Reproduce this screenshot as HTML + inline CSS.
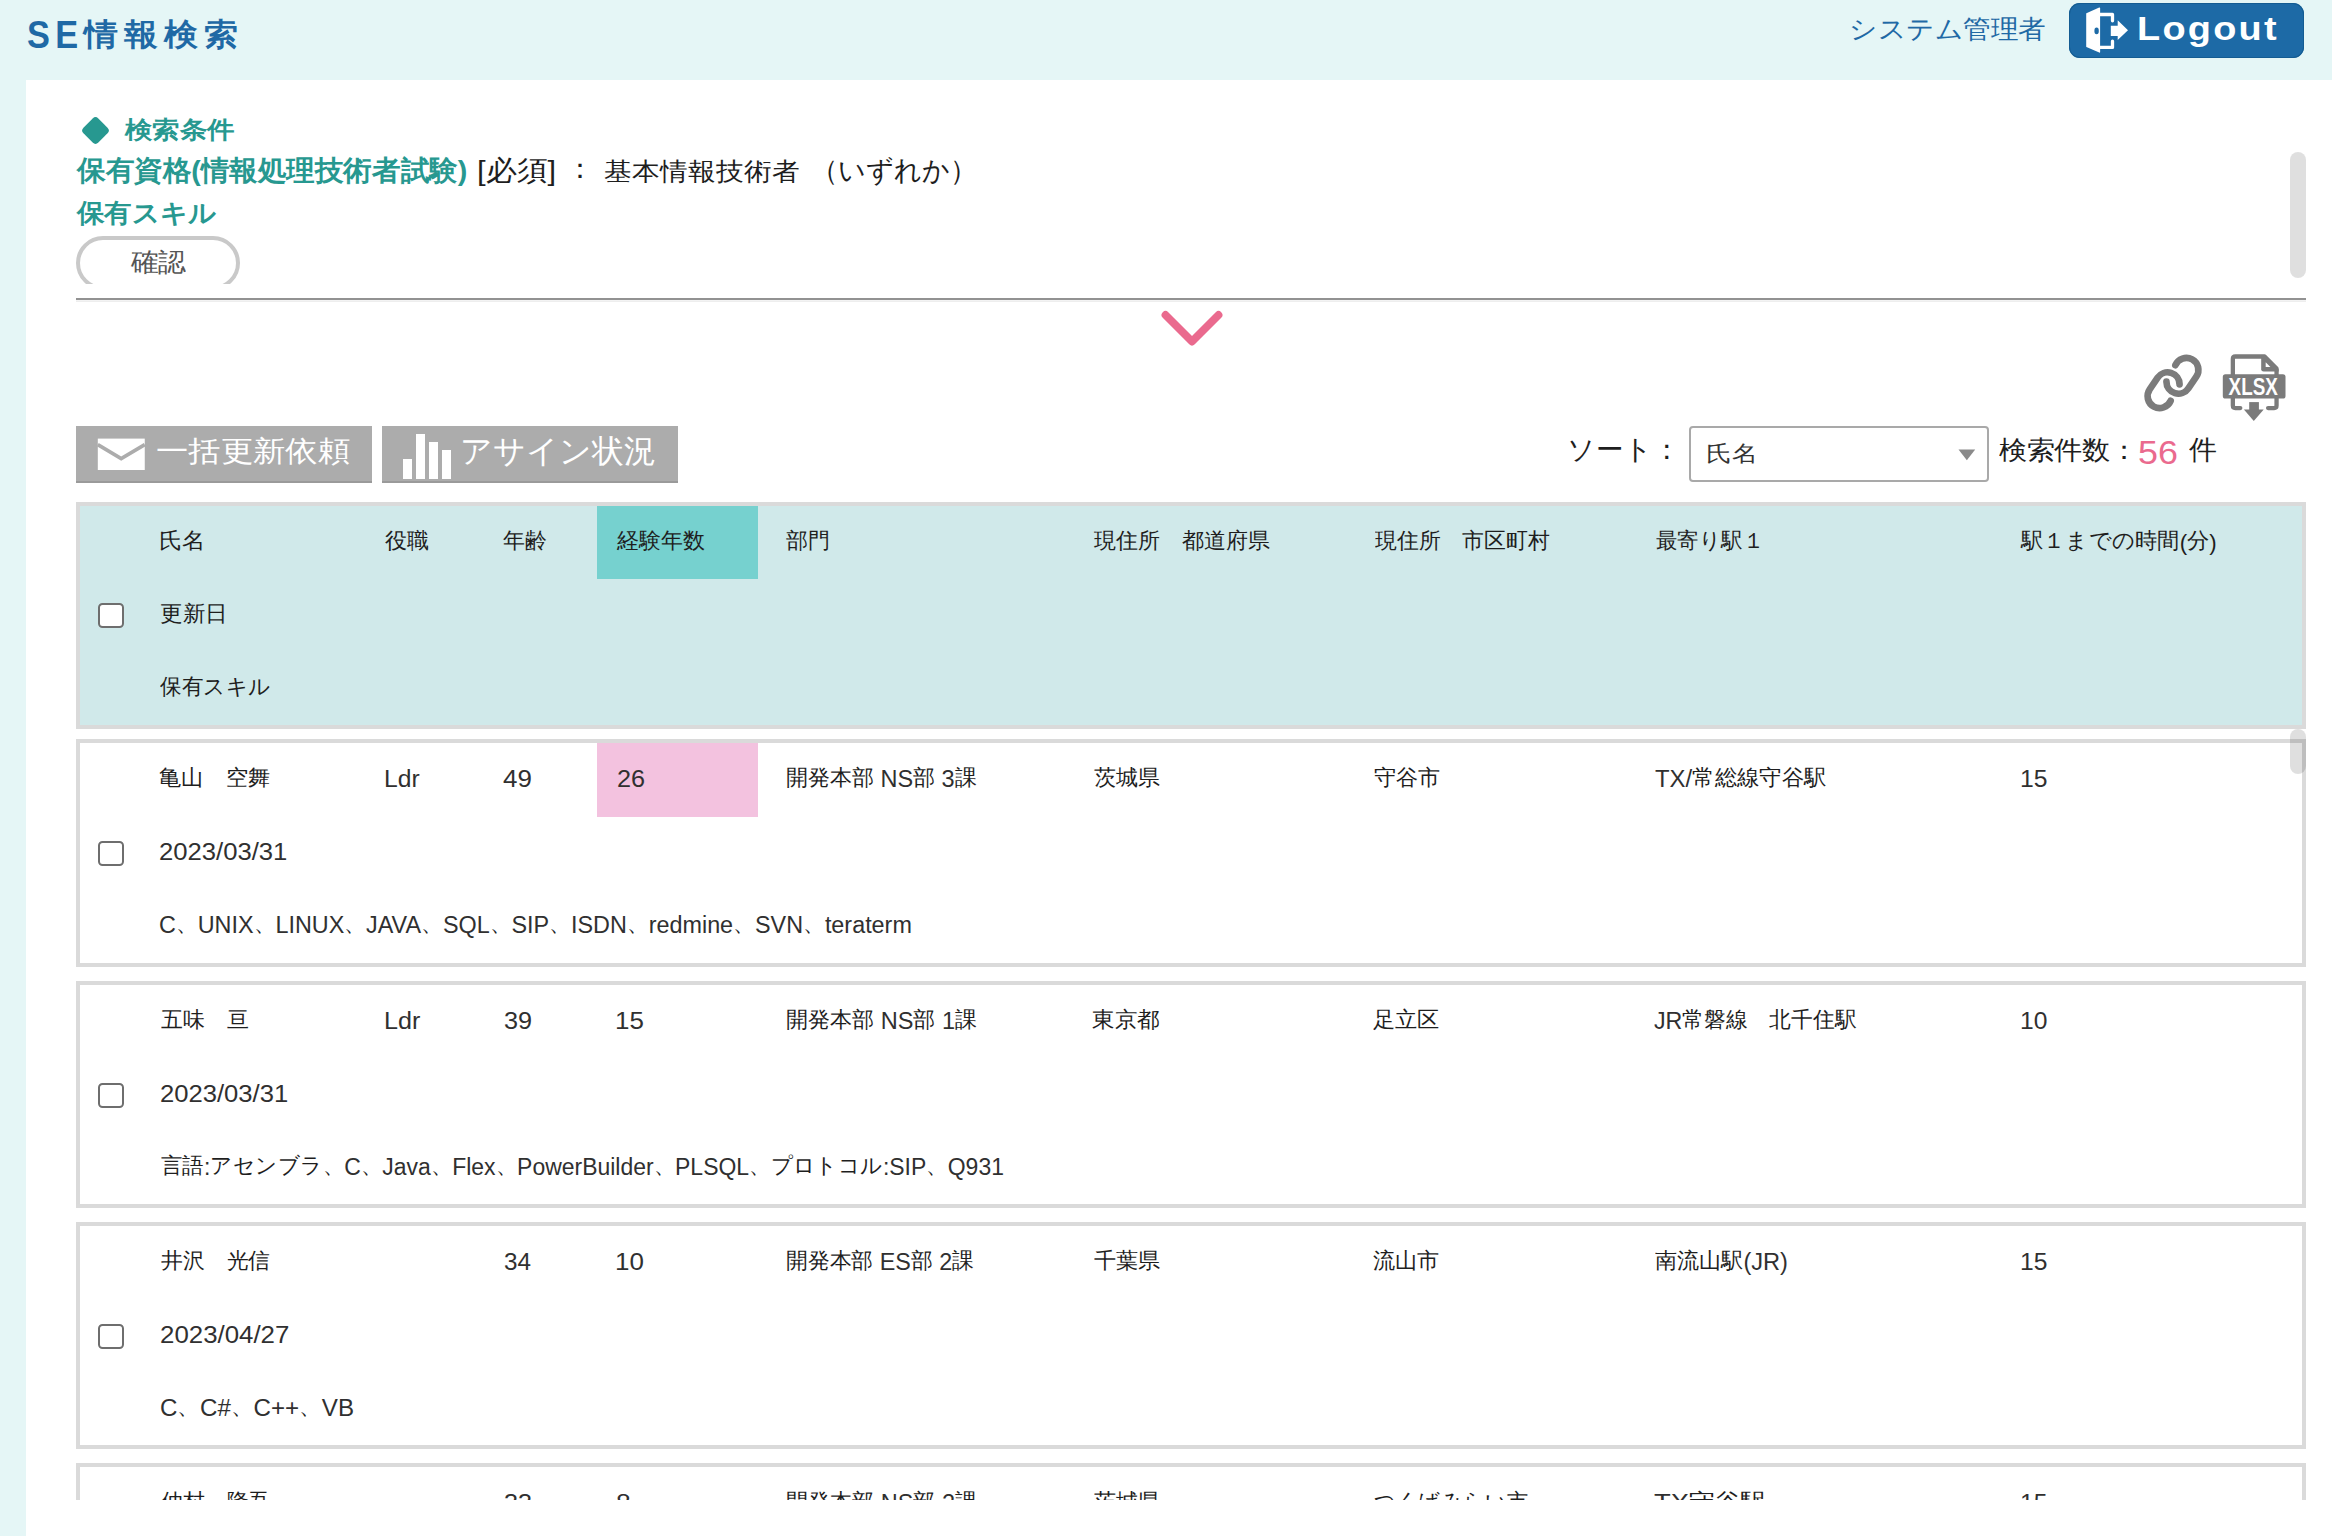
<!DOCTYPE html>
<html><head><meta charset="utf-8"><style>
html,body{margin:0;padding:0}
body{width:2332px;height:1536px;overflow:hidden;position:relative;background:#e5f6f6;font-family:"Liberation Sans", sans-serif}
</style></head><body>
<div style="position:absolute;left:26px;top:80px;width:2306px;height:1456px;background:#fff"></div><div style="position:absolute;left:2069px;top:3px;width:235px;height:55px;background:#1d6aa6;border-radius:11px;box-shadow:inset 0 0 0 1px #145c92"></div><svg style="position:absolute;left:2066px;top:0px" width="74" height="62" viewBox="0 0 74 62">
<path d="M20.4 13.2 L33.2 7.5 Q34.1 7.2 34.1 8.2 L34.1 52.0 Q34.1 53 33.2 52.6 L20.4 46.9 Q20.2 46.8 20.2 46.4 L20.2 13.6 Q20.2 13.3 20.4 13.2 Z" fill="#fff"/>
<ellipse cx="30.6" cy="30.9" rx="2.2" ry="3.3" fill="#1d6aa6"/>
<path d="M34 14.5 H46.5 V20.8" fill="none" stroke="#fff" stroke-width="3.3" stroke-linecap="round" stroke-linejoin="round"/>
<path d="M34 47.4 H46.5 V41.2" fill="none" stroke="#fff" stroke-width="3.3" stroke-linecap="round" stroke-linejoin="round"/>
<path d="M44.8 25.8 H51.7 V20.2 L62 30.2 L51.7 40 V35.9 H44.8 Z" fill="#fff"/>
</svg><div style="position:absolute;left:84.5px;top:119.5px;width:21px;height:21px;background:#279890;transform:rotate(45deg);border-radius:4px"></div><div style="position:absolute;left:76px;top:80px;width:2200px;height:204px;overflow:hidden"><div style="position:absolute;left:0px;top:156px;width:164px;height:54px;border:4px solid #c9c9c9;border-radius:27px;background:#fff;box-sizing:border-box"></div></div><div style="position:absolute;left:2290px;top:152px;width:16px;height:126px;background:rgba(0,0,0,0.125);border-radius:8px"></div><div style="position:absolute;left:76px;top:298px;width:2230px;height:2px;background:#929292"></div><div style="position:absolute;left:76px;top:300px;width:2230px;height:1px;background:#f3f3f3"></div><div style="position:absolute;left:76px;top:301px;width:2230px;height:1px;background:#eeeeee"></div><svg style="position:absolute;left:1150px;top:300px" width="90" height="60" viewBox="1150 300 90 60"><polyline points="1165.5,315 1192,341.5 1218.5,315" fill="none" stroke="#ea6a8e" stroke-width="7.8" stroke-linecap="round" stroke-linejoin="round"/></svg><svg style="position:absolute;left:2143.4px;top:353.3px" width="60" height="60" viewBox="-30 -30 60 60">
<g fill="none" stroke="#7b7b7b" stroke-width="6.7" stroke-linecap="round">
<path d="M 2.37 -17.81 A 12 12 0 1 1 23.31 -6.32 L 15.36 5.37 A 12 12 0 0 1 -6.56 -1.37"/>
<path d="M -2.37 17.81 A 12 12 0 1 1 -23.31 6.32 L -15.36 -5.37 A 12 12 0 0 1 6.56 1.37"/>
</g></svg><svg style="position:absolute;left:2218px;top:348px" width="74" height="78" viewBox="0 0 74 78">
<g fill="none" stroke="#7b7b7b" stroke-width="4.3" stroke-linejoin="round">
<path d="M 14.85 27 V 11 Q 14.85 8.5 17.3 8.5 H 46.6 L 58.55 20.6 V 27"/>
<path d="M 14.85 50 V 57.6 Q 14.85 60.05 17.3 60.05 H 22.3" stroke-linecap="round"/>
<path d="M 50.1 60.05 H 56.1 Q 58.55 60.05 58.55 57.6 V 50" stroke-linecap="round"/>
</g>
<path d="M 43.2 8 H 47.2 L 60.7 21.6 V 23.6 H 45.6 Q 43.2 23.6 43.2 21.2 Z" fill="#7b7b7b"/>
<path d="M 47.7 14.2 L 52.4 19 H 47.7 Z" fill="#fff"/>
<rect x="4.8" y="26.2" width="62.7" height="24.3" rx="2.6" fill="#7b7b7b"/>
<text x="10.6" y="47.2" font-family="Liberation Sans" font-weight="bold" font-size="23.5" fill="#fff" textLength="49.2" lengthAdjust="spacingAndGlyphs">XLSX</text>
<rect x="31.2" y="54.1" width="9.7" height="8" fill="#7b7b7b"/>
<path d="M 25.9 61.5 H 45.7 L 35.8 72.9 Z" fill="#7b7b7b" stroke="#fff" stroke-width="0"/>
</svg><div style="position:absolute;left:76px;top:426px;width:296px;height:57px;background:#acacac;box-shadow:inset 0 -2px 0 #9a9a9a"></div><div style="position:absolute;left:382px;top:426px;width:296px;height:57px;background:#acacac;box-shadow:inset 0 -2px 0 #9a9a9a"></div><svg style="position:absolute;left:90px;top:426px" width="70" height="57" viewBox="0 0 70 57">
<rect x="7.8" y="12.6" width="46.95" height="31.4" fill="#fff"/>
<polyline points="7.8,18.6 31.2,32.6 54.75,18.6" fill="none" stroke="#acacac" stroke-width="3.6"/>
</svg><div style="position:absolute;left:403.2px;top:458.9px;width:9.100000000000023px;height:20.0px;background:#fff"></div><div style="position:absolute;left:416px;top:434.2px;width:9.100000000000023px;height:44.69999999999999px;background:#fff"></div><div style="position:absolute;left:429px;top:442.3px;width:9.100000000000023px;height:36.599999999999966px;background:#fff"></div><div style="position:absolute;left:441.6px;top:449.9px;width:9.099999999999966px;height:29.0px;background:#fff"></div><div style="position:absolute;left:1689px;top:426px;width:300px;height:55.5px;border:2.5px solid #a9a9a9;border-radius:4px;box-sizing:border-box;background:#fff"></div><svg style="position:absolute;left:1950px;top:440px" width="30" height="30" viewBox="1950 440 30 30"><path d="M1958.5 449.6 H1975.2 L1966.85 460.3 Z" fill="#8a8a8a"/></svg><div style="position:absolute;left:76px;top:502px;width:2230px;height:227px;background:#d0e9ea;border:4px solid #dadada;box-sizing:border-box"></div><div style="position:absolute;left:597px;top:506px;width:161px;height:73px;background:#76d1cf"></div><div style="position:absolute;left:98.3px;top:603.2px;width:25.5px;height:25.299999999999955px;border:2px solid #6e6e6e;border-radius:4.5px;background:#fff;box-sizing:border-box"></div><div style="position:absolute;left:76px;top:729px;width:2230px;height:771px;overflow:hidden"><div style="position:absolute;left:0px;top:10px;width:2230px;height:228px;border:4px solid #dadada;box-sizing:border-box;background:#fff"></div><div style="position:absolute;left:0px;top:252px;width:2230px;height:227px;border:4px solid #dadada;box-sizing:border-box;background:#fff"></div><div style="position:absolute;left:0px;top:493px;width:2230px;height:227px;border:4px solid #dadada;box-sizing:border-box;background:#fff"></div><div style="position:absolute;left:0px;top:734px;width:2230px;height:227px;border:4px solid #dadada;box-sizing:border-box;background:#fff"></div><div style="position:absolute;left:521px;top:14px;width:161px;height:74px;background:#f3c2df"></div><div style="position:absolute;left:22.299999999999997px;top:112.20000000000005px;width:25.5px;height:25.3px;border:2px solid #6e6e6e;border-radius:4.5px;background:#fff;box-sizing:border-box"></div><div style="position:absolute;left:22.299999999999997px;top:354.20000000000005px;width:25.5px;height:25.3px;border:2px solid #6e6e6e;border-radius:4.5px;background:#fff;box-sizing:border-box"></div><div style="position:absolute;left:22.299999999999997px;top:595.2px;width:25.5px;height:25.3px;border:2px solid #6e6e6e;border-radius:4.5px;background:#fff;box-sizing:border-box"></div><div style="position:absolute;left:22.299999999999997px;top:836.2px;width:25.5px;height:25.3px;border:2px solid #6e6e6e;border-radius:4.5px;background:#fff;box-sizing:border-box"></div><div style="position:absolute;left:83.39px;top:39.50px;font-size:22px;font-weight:normal;letter-spacing:0px;line-height:22px;white-space:nowrap;color:#1e1e1e;transform-origin:0 0;transform:scale(1.0120,1.0000);"><span style="position:relative;top:-2px;font-size:22px">亀山　空舞</span></div><div style="position:absolute;left:308.10px;top:38.50px;font-size:22px;font-weight:normal;letter-spacing:0px;line-height:22px;white-space:nowrap;color:#1e1e1e;transform-origin:0 0;transform:scale(1.0500,1.0000);"><span style="font-size:23.5px;color:#303030">Ldr</span></div><div style="position:absolute;left:427.40px;top:38.50px;font-size:22px;font-weight:normal;letter-spacing:0px;line-height:22px;white-space:nowrap;color:#1e1e1e;transform-origin:0 0;transform:scale(1.1042,1.0000);"><span style="font-size:23.5px;color:#303030">49</span></div><div style="position:absolute;left:540.92px;top:38.50px;font-size:22px;font-weight:normal;letter-spacing:0px;line-height:22px;white-space:nowrap;color:#1e1e1e;transform-origin:0 0;transform:scale(1.0750,1.0000);"><span style="font-size:23.5px;color:#303030">26</span></div><div style="position:absolute;left:709.90px;top:38.50px;font-size:22px;font-weight:normal;letter-spacing:0px;line-height:22px;white-space:nowrap;color:#1e1e1e;transform-origin:0 0;"><span style="position:relative;top:-2px;font-size:22px">開発本部</span><span style="font-size:23.5px;color:#303030"> NS</span><span style="position:relative;top:-2px;font-size:22px">部</span><span style="font-size:23.5px;color:#303030"> 3</span><span style="position:relative;top:-2px;font-size:22px">課</span></div><div style="position:absolute;left:1017.80px;top:39.50px;font-size:22px;font-weight:normal;letter-spacing:0px;line-height:22px;white-space:nowrap;color:#1e1e1e;transform-origin:0 0;"><span style="position:relative;top:-2px;font-size:22px">茨城県</span></div><div style="position:absolute;left:1297.99px;top:39.50px;font-size:22px;font-weight:normal;letter-spacing:0px;line-height:22px;white-space:nowrap;color:#1e1e1e;transform-origin:0 0;transform:scale(1.0063,1.0000);"><span style="position:relative;top:-2px;font-size:22px">守谷市</span></div><div style="position:absolute;left:1578.58px;top:38.50px;font-size:22px;font-weight:normal;letter-spacing:0px;line-height:22px;white-space:nowrap;color:#1e1e1e;transform-origin:0 0;transform:scale(1.0168,1.0000);"><span style="font-size:23.5px;color:#303030">TX/</span><span style="position:relative;top:-2px;font-size:22px">常総線守谷駅</span></div><div style="position:absolute;left:1944.10px;top:38.50px;font-size:22px;font-weight:normal;letter-spacing:0px;line-height:22px;white-space:nowrap;color:#1e1e1e;transform-origin:0 0;transform:scale(1.0522,1.0000);"><span style="font-size:23.5px;color:#303030">15</span></div><div style="position:absolute;left:83.31px;top:111.50px;font-size:22px;font-weight:normal;letter-spacing:0px;line-height:22px;white-space:nowrap;color:#1e1e1e;transform-origin:0 0;transform:scale(1.0914,1.0000);"><span style="font-size:23.5px;color:#303030">2023/03/31</span></div><div style="position:absolute;left:83.41px;top:184.50px;font-size:22px;font-weight:normal;letter-spacing:0px;line-height:22px;white-space:nowrap;color:#1e1e1e;transform-origin:0 0;transform:scale(0.9939,1.0000);"><span style="font-size:23.5px;color:#303030">C</span><span style="position:relative;top:-2px;font-size:22px">、</span><span style="font-size:23.5px;color:#303030">UNIX</span><span style="position:relative;top:-2px;font-size:22px">、</span><span style="font-size:23.5px;color:#303030">LINUX</span><span style="position:relative;top:-2px;font-size:22px">、</span><span style="font-size:23.5px;color:#303030">JAVA</span><span style="position:relative;top:-2px;font-size:22px">、</span><span style="font-size:23.5px;color:#303030">SQL</span><span style="position:relative;top:-2px;font-size:22px">、</span><span style="font-size:23.5px;color:#303030">SIP</span><span style="position:relative;top:-2px;font-size:22px">、</span><span style="font-size:23.5px;color:#303030">ISDN</span><span style="position:relative;top:-2px;font-size:22px">、</span><span style="font-size:23.5px;color:#303030">redmine</span><span style="position:relative;top:-2px;font-size:22px">、</span><span style="font-size:23.5px;color:#303030">SVN</span><span style="position:relative;top:-2px;font-size:22px">、</span><span style="font-size:23.5px;color:#303030">teraterm</span></div><div style="position:absolute;left:84.60px;top:281.50px;font-size:22px;font-weight:normal;letter-spacing:0px;line-height:22px;white-space:nowrap;color:#1e1e1e;transform-origin:0 0;transform:scale(0.9931,1.0000);"><span style="position:relative;top:-2px;font-size:22px">五味　亘</span></div><div style="position:absolute;left:307.66px;top:280.50px;font-size:22px;font-weight:normal;letter-spacing:0px;line-height:22px;white-space:nowrap;color:#1e1e1e;transform-origin:0 0;transform:scale(1.0687,1.0000);"><span style="font-size:23.5px;color:#303030">Ldr</span></div><div style="position:absolute;left:428.12px;top:280.50px;font-size:22px;font-weight:normal;letter-spacing:0px;line-height:22px;white-space:nowrap;color:#1e1e1e;transform-origin:0 0;transform:scale(1.0750,1.0000);"><span style="font-size:23.5px;color:#303030">39</span></div><div style="position:absolute;left:539.39px;top:280.50px;font-size:22px;font-weight:normal;letter-spacing:0px;line-height:22px;white-space:nowrap;color:#1e1e1e;transform-origin:0 0;transform:scale(1.1043,1.0000);"><span style="font-size:23.5px;color:#303030">15</span></div><div style="position:absolute;left:710.20px;top:280.50px;font-size:22px;font-weight:normal;letter-spacing:0px;line-height:22px;white-space:nowrap;color:#1e1e1e;transform-origin:0 0;transform:scale(1.0021,1.0000);"><span style="position:relative;top:-2px;font-size:22px">開発本部</span><span style="font-size:23.5px;color:#303030"> NS</span><span style="position:relative;top:-2px;font-size:22px">部</span><span style="font-size:23.5px;color:#303030"> 1</span><span style="position:relative;top:-2px;font-size:22px">課</span></div><div style="position:absolute;left:1016.48px;top:281.50px;font-size:22px;font-weight:normal;letter-spacing:0px;line-height:22px;white-space:nowrap;color:#1e1e1e;transform-origin:0 0;transform:scale(1.0234,1.0000);"><span style="position:relative;top:-2px;font-size:22px">東京都</span></div><div style="position:absolute;left:1297.49px;top:281.50px;font-size:22px;font-weight:normal;letter-spacing:0px;line-height:22px;white-space:nowrap;color:#1e1e1e;transform-origin:0 0;transform:scale(1.0078,1.0000);"><span style="position:relative;top:-2px;font-size:22px">足立区</span></div><div style="position:absolute;left:1578.41px;top:280.50px;font-size:22px;font-weight:normal;letter-spacing:0px;line-height:22px;white-space:nowrap;color:#1e1e1e;transform-origin:0 0;transform:scale(0.9892,1.0000);"><span style="font-size:23.5px;color:#303030">JR</span><span style="position:relative;top:-2px;font-size:22px">常磐線　北千住駅</span></div><div style="position:absolute;left:1944.40px;top:280.50px;font-size:22px;font-weight:normal;letter-spacing:0px;line-height:22px;white-space:nowrap;color:#1e1e1e;transform-origin:0 0;transform:scale(1.0478,1.0000);"><span style="font-size:23.5px;color:#303030">10</span></div><div style="position:absolute;left:83.51px;top:353.50px;font-size:22px;font-weight:normal;letter-spacing:0px;line-height:22px;white-space:nowrap;color:#1e1e1e;transform-origin:0 0;transform:scale(1.0897,1.0000);"><span style="font-size:23.5px;color:#303030">2023/03/31</span></div><div style="position:absolute;left:84.60px;top:426.50px;font-size:22px;font-weight:normal;letter-spacing:0px;line-height:22px;white-space:nowrap;color:#1e1e1e;transform-origin:0 0;transform:scale(0.9767,1.0000);"><span style="position:relative;top:-2px;font-size:22px">言語</span><span style="font-size:23.5px;color:#303030">:</span><span style="position:relative;top:-2px;font-size:22px">アセンブラ、</span><span style="font-size:23.5px;color:#303030">C</span><span style="position:relative;top:-2px;font-size:22px">、</span><span style="font-size:23.5px;color:#303030">Java</span><span style="position:relative;top:-2px;font-size:22px">、</span><span style="font-size:23.5px;color:#303030">Flex</span><span style="position:relative;top:-2px;font-size:22px">、</span><span style="font-size:23.5px;color:#303030">PowerBuilder</span><span style="position:relative;top:-2px;font-size:22px">、</span><span style="font-size:23.5px;color:#303030">PLSQL</span><span style="position:relative;top:-2px;font-size:22px">、プロトコル</span><span style="font-size:23.5px;color:#303030">:SIP</span><span style="position:relative;top:-2px;font-size:22px">、</span><span style="font-size:23.5px;color:#303030">Q931</span></div><div style="position:absolute;left:84.60px;top:522.50px;font-size:22px;font-weight:normal;letter-spacing:0px;line-height:22px;white-space:nowrap;color:#1e1e1e;transform-origin:0 0;transform:scale(0.9936,1.0000);"><span style="position:relative;top:-2px;font-size:22px">井沢　光信</span></div><div style="position:absolute;left:428.17px;top:521.50px;font-size:22px;font-weight:normal;letter-spacing:0px;line-height:22px;white-space:nowrap;color:#1e1e1e;transform-origin:0 0;transform:scale(1.0320,1.0000);"><span style="font-size:23.5px;color:#303030">34</span></div><div style="position:absolute;left:539.39px;top:521.50px;font-size:22px;font-weight:normal;letter-spacing:0px;line-height:22px;white-space:nowrap;color:#1e1e1e;transform-origin:0 0;transform:scale(1.1043,1.0000);"><span style="font-size:23.5px;color:#303030">10</span></div><div style="position:absolute;left:710.21px;top:521.50px;font-size:22px;font-weight:normal;letter-spacing:0px;line-height:22px;white-space:nowrap;color:#1e1e1e;transform-origin:0 0;transform:scale(0.9920,1.0000);"><span style="position:relative;top:-2px;font-size:22px">開発本部</span><span style="font-size:23.5px;color:#303030"> ES</span><span style="position:relative;top:-2px;font-size:22px">部</span><span style="font-size:23.5px;color:#303030"> 2</span><span style="position:relative;top:-2px;font-size:22px">課</span></div><div style="position:absolute;left:1017.50px;top:522.50px;font-size:22px;font-weight:normal;letter-spacing:0px;line-height:22px;white-space:nowrap;color:#1e1e1e;transform-origin:0 0;transform:scale(1.0077,1.0000);"><span style="position:relative;top:-2px;font-size:22px">千葉県</span></div><div style="position:absolute;left:1297.49px;top:522.50px;font-size:22px;font-weight:normal;letter-spacing:0px;line-height:22px;white-space:nowrap;color:#1e1e1e;transform-origin:0 0;transform:scale(1.0078,1.0000);"><span style="position:relative;top:-2px;font-size:22px">流山市</span></div><div style="position:absolute;left:1579.40px;top:521.50px;font-size:22px;font-weight:normal;letter-spacing:0px;line-height:22px;white-space:nowrap;color:#1e1e1e;transform-origin:0 0;transform:scale(1.0046,1.0000);"><span style="position:relative;top:-2px;font-size:22px">南流山駅</span><span style="font-size:23.5px;color:#303030">(JR)</span></div><div style="position:absolute;left:1944.40px;top:521.50px;font-size:22px;font-weight:normal;letter-spacing:0px;line-height:22px;white-space:nowrap;color:#1e1e1e;transform-origin:0 0;transform:scale(1.0478,1.0000);"><span style="font-size:23.5px;color:#303030">15</span></div><div style="position:absolute;left:83.50px;top:594.50px;font-size:22px;font-weight:normal;letter-spacing:0px;line-height:22px;white-space:nowrap;color:#1e1e1e;transform-origin:0 0;transform:scale(1.1000,1.0000);"><span style="font-size:23.5px;color:#303030">2023/04/27</span></div><div style="position:absolute;left:83.57px;top:667.50px;font-size:22px;font-weight:normal;letter-spacing:0px;line-height:22px;white-space:nowrap;color:#1e1e1e;transform-origin:0 0;transform:scale(1.0278,1.0000);"><span style="font-size:23.5px;color:#303030">C</span><span style="position:relative;top:-2px;font-size:22px">、</span><span style="font-size:23.5px;color:#303030">C#</span><span style="position:relative;top:-2px;font-size:22px">、</span><span style="font-size:23.5px;color:#303030">C++</span><span style="position:relative;top:-2px;font-size:22px">、</span><span style="font-size:23.5px;color:#303030">VB</span></div><div style="position:absolute;left:84.60px;top:763.50px;font-size:22px;font-weight:normal;letter-spacing:0px;line-height:22px;white-space:nowrap;color:#1e1e1e;transform-origin:0 0;transform:scale(0.9936,1.0000);"><span style="position:relative;top:-2px;font-size:22px">仲村　隆吾</span></div><div style="position:absolute;left:428.12px;top:762.50px;font-size:22px;font-weight:normal;letter-spacing:0px;line-height:22px;white-space:nowrap;color:#1e1e1e;transform-origin:0 0;transform:scale(1.0750,1.0000);"><span style="font-size:23.5px;color:#303030">33</span></div><div style="position:absolute;left:540.47px;top:762.50px;font-size:22px;font-weight:normal;letter-spacing:0px;line-height:22px;white-space:nowrap;color:#1e1e1e;transform-origin:0 0;transform:scale(1.1273,1.0000);"><span style="font-size:23.5px;color:#303030">8</span></div><div style="position:absolute;left:710.20px;top:762.50px;font-size:22px;font-weight:normal;letter-spacing:0px;line-height:22px;white-space:nowrap;color:#1e1e1e;transform-origin:0 0;"><span style="position:relative;top:-2px;font-size:22px">開発本部</span><span style="font-size:23.5px;color:#303030"> NS</span><span style="position:relative;top:-2px;font-size:22px">部</span><span style="font-size:23.5px;color:#303030"> 2</span><span style="position:relative;top:-2px;font-size:22px">課</span></div><div style="position:absolute;left:1017.50px;top:763.50px;font-size:22px;font-weight:normal;letter-spacing:0px;line-height:22px;white-space:nowrap;color:#1e1e1e;transform-origin:0 0;transform:scale(1.0077,1.0000);"><span style="position:relative;top:-2px;font-size:22px">茨城県</span></div><div style="position:absolute;left:1297.53px;top:763.50px;font-size:22px;font-weight:normal;letter-spacing:0px;line-height:22px;white-space:nowrap;color:#1e1e1e;transform-origin:0 0;transform:scale(0.9652,1.0000);"><span style="position:relative;top:-2px;font-size:22px">つくばみらい市</span></div><div style="position:absolute;left:1578.23px;top:762.50px;font-size:22px;font-weight:normal;letter-spacing:0px;line-height:22px;white-space:nowrap;color:#1e1e1e;transform-origin:0 0;transform:scale(1.1660,1.0000);"><span style="font-size:23.5px;color:#303030">TX</span><span style="position:relative;top:-2px;font-size:22px">守谷駅</span></div><div style="position:absolute;left:1944.40px;top:762.50px;font-size:22px;font-weight:normal;letter-spacing:0px;line-height:22px;white-space:nowrap;color:#1e1e1e;transform-origin:0 0;transform:scale(1.0478,1.0000);"><span style="font-size:23.5px;color:#303030">15</span></div><div style="position:absolute;left:83.50px;top:835.50px;font-size:22px;font-weight:normal;letter-spacing:0px;line-height:22px;white-space:nowrap;color:#1e1e1e;transform-origin:0 0;transform:scale(1.1000,1.0000);"><span style="font-size:23.5px;color:#303030">2023/04/27</span></div></div><div style="position:absolute;left:2290px;top:729px;width:16px;height:45px;background:rgba(0,0,0,0.125);border-radius:8px"></div><div style="position:absolute;left:26.50px;top:15.76px;font-size:38px;font-weight:bold;letter-spacing:6px;line-height:38px;white-space:nowrap;color:#1f69a5;transform-origin:0 0;transform:scale(0.9037,1.0074);">SE</div><div style="position:absolute;left:83.60px;top:17.90px;font-size:34px;font-weight:bold;letter-spacing:6px;line-height:34px;white-space:nowrap;color:#1f69a5;transform-origin:0 0;transform:scale(1.0026,0.9171);">情報検索</div><div style="position:absolute;left:1848.65px;top:17.00px;font-size:28px;font-weight:normal;letter-spacing:0px;line-height:28px;white-space:nowrap;color:#1f69a5;transform-origin:0 0;transform:scale(0.9847,0.9259);">システム管理者</div><div style="position:absolute;left:2137.37px;top:11.00px;font-size:34px;font-weight:bold;letter-spacing:2px;line-height:34px;white-space:nowrap;color:#ffffff;transform-origin:0 0;transform:scale(1.1146,1.0000);">Logout</div><div style="position:absolute;left:124.78px;top:118.36px;font-size:28px;font-weight:bold;letter-spacing:0px;line-height:28px;white-space:nowrap;color:#279890;transform-origin:0 0;transform:scale(0.9796,0.8586);">検索条件</div><div style="position:absolute;left:77.00px;top:157.30px;font-size:28px;font-weight:bold;letter-spacing:0px;line-height:28px;white-space:nowrap;color:#279890;transform-origin:0 0;transform:scale(1.0197,1.0000);">保有資格(情報処理技術者試験)</div><div style="position:absolute;left:477.39px;top:156.70px;font-size:28px;font-weight:normal;letter-spacing:0px;line-height:28px;white-space:nowrap;color:#1e1e1e;transform-origin:0 0;transform:scale(1.1059,1.0000);">[必須]</div><div style="position:absolute;left:565.50px;top:155.20px;font-size:28px;font-weight:normal;letter-spacing:0px;line-height:28px;white-space:nowrap;color:#1e1e1e;transform-origin:0 0;">：</div><div style="position:absolute;left:604.00px;top:159.00px;font-size:28px;font-weight:normal;letter-spacing:0px;line-height:28px;white-space:nowrap;color:#1e1e1e;transform-origin:0 0;transform:scale(1.0000,0.9037);">基本情報技術者</div><div style="position:absolute;left:810.50px;top:156.70px;font-size:28px;font-weight:normal;letter-spacing:0px;line-height:28px;white-space:nowrap;color:#1e1e1e;transform-origin:0 0;transform:scale(0.9669,1.0000);">（いずれか）</div><div style="position:absolute;left:77.00px;top:201.00px;font-size:28px;font-weight:bold;letter-spacing:0px;line-height:28px;white-space:nowrap;color:#279890;transform-origin:0 0;transform:scale(0.9768,0.9259);">保有スキル</div><div style="position:absolute;left:130.50px;top:249.70px;font-size:28px;font-weight:normal;letter-spacing:0px;line-height:28px;white-space:nowrap;color:#555555;transform-origin:0 0;transform:scale(0.9768,0.9111);">確認</div><div style="position:absolute;left:156.39px;top:437.40px;font-size:32px;font-weight:normal;letter-spacing:0px;line-height:32px;white-space:nowrap;color:#ffffff;transform-origin:0 0;transform:scale(1.0111,0.9031);">一括更新依頼</div><div style="position:absolute;left:460.41px;top:435.40px;font-size:32px;font-weight:normal;letter-spacing:0px;line-height:32px;white-space:nowrap;color:#ffffff;transform-origin:0 0;transform:scale(0.9979,1.0000);">アサイン状況</div><div style="position:absolute;left:1566.91px;top:435.65px;font-size:28px;font-weight:normal;letter-spacing:0px;line-height:28px;white-space:nowrap;color:#1e1e1e;transform-origin:0 0;transform:scale(0.9969,1.0167);">ソート：</div><div style="position:absolute;left:1705.86px;top:443.00px;font-size:24px;font-weight:normal;letter-spacing:0px;line-height:24px;white-space:nowrap;color:#333333;transform-origin:0 0;transform:scale(1.0714,0.9130);">氏名</div><div style="position:absolute;left:1998.70px;top:437.80px;font-size:28px;font-weight:normal;letter-spacing:0px;line-height:28px;white-space:nowrap;color:#1e1e1e;transform-origin:0 0;transform:scale(0.9891,0.9148);">検索件数：</div><div style="position:absolute;left:2138.12px;top:435.63px;font-size:33px;font-weight:normal;letter-spacing:0px;line-height:33px;white-space:nowrap;color:#ea6a8e;transform-origin:0 0;transform:scale(1.0879,1.0130);">56</div><div style="position:absolute;left:2189.10px;top:436.85px;font-size:28px;font-weight:normal;letter-spacing:0px;line-height:28px;white-space:nowrap;color:#1e1e1e;transform-origin:0 0;transform:scale(0.9815,0.9500);">件</div><div style="position:absolute;left:158.79px;top:531.50px;font-size:22px;font-weight:normal;letter-spacing:0px;line-height:22px;white-space:nowrap;color:#1e1e1e;transform-origin:0 0;transform:scale(1.0564,1.0000);"><span style="position:relative;top:-2px">氏名</span></div><div style="position:absolute;left:385.20px;top:531.50px;font-size:22px;font-weight:normal;letter-spacing:0px;line-height:22px;white-space:nowrap;color:#1e1e1e;transform-origin:0 0;"><span style="position:relative;top:-2px">役職</span></div><div style="position:absolute;left:503.00px;top:531.50px;font-size:22px;font-weight:normal;letter-spacing:0px;line-height:22px;white-space:nowrap;color:#1e1e1e;transform-origin:0 0;"><span style="position:relative;top:-2px">年齢</span></div><div style="position:absolute;left:617.10px;top:531.50px;font-size:22px;font-weight:normal;letter-spacing:0px;line-height:22px;white-space:nowrap;color:#1e1e1e;transform-origin:0 0;"><span style="position:relative;top:-2px">経験年数</span></div><div style="position:absolute;left:786.20px;top:531.50px;font-size:22px;font-weight:normal;letter-spacing:0px;line-height:22px;white-space:nowrap;color:#1e1e1e;transform-origin:0 0;"><span style="position:relative;top:-2px">部門</span></div><div style="position:absolute;left:1093.50px;top:531.50px;font-size:22px;font-weight:normal;letter-spacing:0px;line-height:22px;white-space:nowrap;color:#1e1e1e;transform-origin:0 0;"><span style="position:relative;top:-2px">現住所　都道府県</span></div><div style="position:absolute;left:1374.80px;top:531.50px;font-size:22px;font-weight:normal;letter-spacing:0px;line-height:22px;white-space:nowrap;color:#1e1e1e;transform-origin:0 0;transform:scale(0.9943,1.0000);"><span style="position:relative;top:-2px">現住所　市区町村</span></div><div style="position:absolute;left:1655.90px;top:531.50px;font-size:22px;font-weight:normal;letter-spacing:0px;line-height:22px;white-space:nowrap;color:#1e1e1e;transform-origin:0 0;transform:scale(0.9764,1.0000);"><span style="position:relative;top:-2px">最寄り駅１</span></div><div style="position:absolute;left:2020.60px;top:531.50px;font-size:22px;font-weight:normal;letter-spacing:0px;line-height:22px;white-space:nowrap;color:#1e1e1e;transform-origin:0 0;transform:scale(1.0104,1.0000);"><span style="position:relative;top:-2px">駅１までの時間</span>(<span style="position:relative;top:-2px">分</span>)</div><div style="position:absolute;left:159.88px;top:604.50px;font-size:22px;font-weight:normal;letter-spacing:0px;line-height:22px;white-space:nowrap;color:#1e1e1e;transform-origin:0 0;transform:scale(1.0230,1.0000);"><span style="position:relative;top:-2px">更新日</span></div><div style="position:absolute;left:160.10px;top:677.50px;font-size:22px;font-weight:normal;letter-spacing:0px;line-height:22px;white-space:nowrap;color:#1e1e1e;transform-origin:0 0;transform:scale(0.9786,1.0000);"><span style="position:relative;top:-2px">保有スキル</span></div>
</body></html>
